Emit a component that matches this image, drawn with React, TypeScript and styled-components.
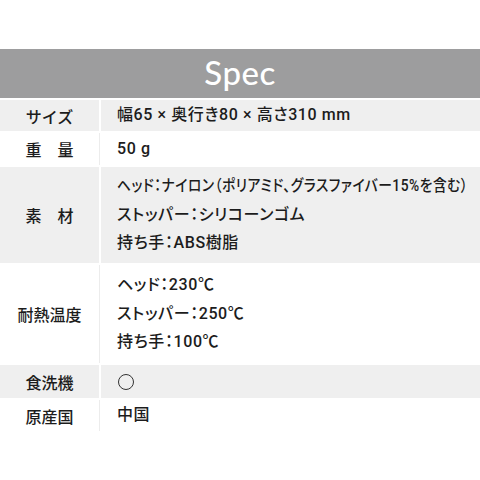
import React from "react";
import styled, { createGlobalStyle } from "styled-components";

const Global = createGlobalStyle`
  html, body { margin: 0; padding: 0; background: #ffffff; }
  body { font-family: "Roboto", "Noto Sans CJK JP", sans-serif; color: #1c1c1c; }
`;

const Page = styled.div`
  width: 480px;
  height: 480px;
  padding-top: 49px;
  box-sizing: border-box;
  background: #fff;
  overflow: hidden;
`;

const TitleBar = styled.div`
  height: 49px;
  background: #9d9d9e;
  display: flex;
  align-items: center;
  justify-content: center;
`;

const Title = styled.h1`
  margin: 0;
  font-family: "Lato", "Noto Sans", sans-serif;
  font-weight: 500;
  font-size: 33px;
  color: #ffffff;
  letter-spacing: 0.5px;
  line-height: 1;
  padding-bottom: 2px;
`;

const Table = styled.div`
  display: flex;
  flex-direction: column;
  gap: 2px;
  padding-top: 2px;
`;

const Row = styled.div<{ $h: number }>`
  display: grid;
  grid-template-columns: 99px 1fr;
  column-gap: 2px;
  height: ${(p) => p.$h}px;
`;

const Label = styled.div<{ $shade: boolean }>`
  background: ${(p) => (p.$shade ? "#efefef" : "#ffffff")};
  box-shadow: ${(p) => (p.$shade ? "none" : "1px 0 0 #ececec")};
  display: flex;
  align-items: center;
  justify-content: center;
  font-family: "Noto Sans CJK JP", sans-serif;
  font-size: 16px;
  font-weight: 500;
  white-space: pre;
`;

const Value = styled.div<{ $shade: boolean }>`
  background: ${(p) => (p.$shade ? "#efefef" : "#ffffff")};
  display: flex;
  flex-direction: column;
  justify-content: center;
  padding-left: 16px;
  font-size: 16px;
  font-weight: 500;
  letter-spacing: 0.6px;
  font-feature-settings: "palt";
`;

const Line = styled.div`
  line-height: 28.5px;
  white-space: nowrap;
`;

const Condensed = styled.span`
  display: inline-block;
  transform: scaleX(0.86);
  transform-origin: left center;
`;

const Circle = styled.span`
  display: inline-block;
  width: 14px;
  height: 14px;
  border: 1px solid #333;
  border-radius: 50%;
  vertical-align: middle;
  margin-left: 1px;
`;

type Spec = { label: string; lines: { text: string; tight?: boolean }[]; h: number };

const specs: Spec[] = [
  { label: "サイズ", lines: [{ text: "幅65 × 奥行き80 × 高さ310 mm" }], h: 31 },
  { label: "重　量", lines: [{ text: "50 g" }], h: 32 },
  {
    label: "素　材",
    lines: [
      { text: "ヘッド：ナイロン（ポリアミド、グラスファイバー15%を含む）", tight: true },
      { text: "ストッパー：シリコーンゴム" },
      { text: "持ち手：ABS樹脂" },
    ],
    h: 96,
  },
  {
    label: "耐熱温度",
    lines: [{ text: "ヘッド：230℃" }, { text: "ストッパー：250℃" }, { text: "持ち手：100℃" }],
    h: 98,
  },
  { label: "食洗機", lines: [{ text: "◯" }], h: 33 },
  { label: "原産国", lines: [{ text: "中国" }], h: 31 },
];

export default function App() {
  return (
    <Page>
      <Global />
      <TitleBar>
        <Title>Spec</Title>
      </TitleBar>
      <Table>
        {specs.map((s, i) => {
          const shade = i % 2 === 0;
          return (
            <Row key={s.label} $h={s.h}>
              <Label $shade={shade}>{s.label}</Label>
              <Value $shade={shade}>
                {s.lines.map((l) => (
                  <Line key={l.text}>
                    {l.text === "◯" ? (
                      <Circle aria-label="◯" />
                    ) : l.tight ? (
                      <Condensed>{l.text}</Condensed>
                    ) : (
                      l.text
                    )}
                  </Line>
                ))}
              </Value>
            </Row>
          );
        })}
      </Table>
    </Page>
  );
}
